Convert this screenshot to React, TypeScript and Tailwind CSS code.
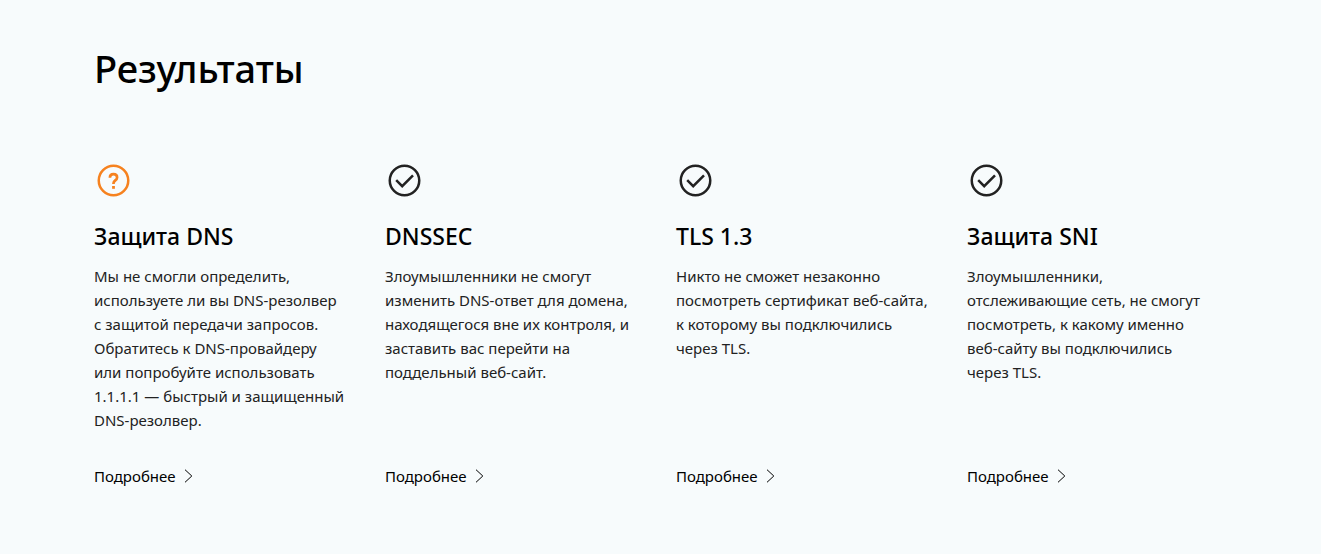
import React from "react";

type Result = { title: string; text: string; status: "unknown" | "ok" };

const results: Result[] = [
  {
    title: "Защита DNS",
    text: "Мы не смогли определить, используете ли вы DNS-резолвер с защитой передачи запросов. Обратитесь к DNS-провайдеру или попробуйте использовать 1.1.1.1 — быстрый и защищенный DNS-резолвер.",
    status: "unknown",
  },
  {
    title: "DNSSEC",
    text: "Злоумышленники не смогут изменить DNS-ответ для домена, находящегося вне их контроля, и заставить вас перейти на поддельный веб-сайт.",
    status: "ok",
  },
  {
    title: "TLS 1.3",
    text: "Никто не сможет незаконно посмотреть сертификат веб-сайта, к которому вы подключились через\u00a0TLS.",
    status: "ok",
  },
  {
    title: "Защита SNI",
    text: "Злоумышленники, отслеживающие сеть, не смогут посмотреть, к какому именно веб-сайту вы подключились через\u00a0TLS.",
    status: "ok",
  },
];

// A word joiner after each hyphen keeps hyphenated words on one line.
const keepHyphenated = (text: string) => text.replaceAll("-", "-\u2060");

function StatusIcon({ status }: { status: Result["status"] }) {
  return (
    <svg
      viewBox="0 0 40 40"
      className={status === "ok" ? "size-10 text-[#222]" : "size-10 text-[#f6821f]"}
      fill="none"
      stroke="currentColor"
      strokeWidth="2.5"
      aria-hidden="true"
    >
      <circle cx="19.5" cy="20.5" r="14.75" />
      {status === "ok" ? (
        <path d="m11.2 20.2 6 6L28 15.4" />
      ) : (
        <>
          <path strokeWidth="2.7" d="M15.9 17.8c0-2.4 1.5-3.7 3.6-3.7s3.6 1.3 3.6 3.3c0 2.9-3.6 3-3.6 5.8v.8" />
          <path fill="currentColor" stroke="none" d="M18.1 26h2.8v2.8h-2.8z" />
        </>
      )}
    </svg>
  );
}

export default function App() {
  return (
    <main className="min-h-screen bg-[#f7fbfc] pt-10 pr-[101px] pb-16 pl-[94px] font-['Noto_Sans',sans-serif] text-black">
      <h1 className="text-[38px] leading-[56px] font-medium">Результаты</h1>
      <div className="mt-16 grid grid-cols-4 gap-x-[38px]">
        {results.map((r) => (
          <section key={r.title} className="flex flex-col">
            <StatusIcon status={r.status} />
            <h2 className="mt-5 text-[23px] leading-8 font-medium">{r.title}</h2>
            <p className="mt-3 mb-8 text-[15px] leading-6 text-[#222]">{keepHyphenated(r.text)}</p>
            <a href="#details" className="mt-auto flex items-center gap-2 text-[15px] leading-6">
              Подробнее
              <svg viewBox="0 0 9 14" className="h-3.5 w-[9px]" fill="none" stroke="currentColor" aria-hidden="true">
                <path d="M1 .7 7.8 7 1 13.3" />
              </svg>
            </a>
          </section>
        ))}
      </div>
    </main>
  );
}
